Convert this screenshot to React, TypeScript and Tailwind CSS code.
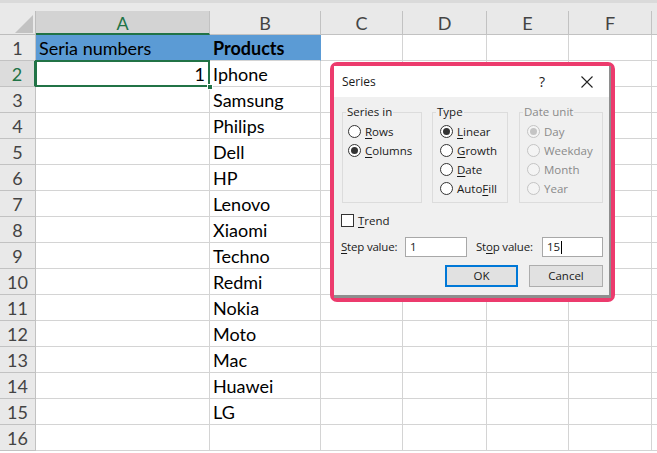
import React from 'react';

const cols = [
  { l: 'A', w: 'w-[174px]' },
  { l: 'B', w: 'w-[111px]' },
  { l: 'C', w: 'w-[82px]' },
  { l: 'D', w: 'w-[84px]' },
  { l: 'E', w: 'w-[82px]' },
  { l: 'F', w: 'w-[83px]' },
  { l: '', w: 'w-[60px]' },
];

const products = ['Iphone', 'Samsung', 'Philips', 'Dell', 'HP', 'Lenovo', 'Xiaomi', 'Techno', 'Redmi', 'Nokia', 'Moto', 'Mac', 'Huawei', 'LG'];

function Radio({ checked, disabled }: { checked?: boolean; disabled?: boolean }) {
  return (
    <span
      className={
        disabled
          ? 'flex h-[13px] w-[13px] shrink-0 items-center justify-center rounded-full border border-[#c4c4c4] bg-[#f4f4f4]'
          : 'flex h-[13px] w-[13px] shrink-0 items-center justify-center rounded-full border border-[#333333] bg-white'
      }
    >
      {checked && (
        <span className={disabled ? 'h-[7px] w-[7px] rounded-full bg-[#c4c4c4]' : 'h-[7px] w-[7px] rounded-full bg-[#333333]'} />
      )}
    </span>
  );
}

function Opt({ checked, disabled, pre, u, post }: { checked?: boolean; disabled?: boolean; pre?: string; u?: string; post: string }) {
  return (
    <div className="flex h-[19px] items-center gap-[4px]">
      <Radio checked={checked} disabled={disabled} />
      <span className={disabled ? 'text-[#8a8a8a]' : 'text-[#1a1a1a]'}>
        {pre}
        {u && <span className="underline underline-offset-[2px]">{u}</span>}
        {post}
      </span>
    </div>
  );
}

function Group({ label, w, pl, disabled, children }: { label: string; w: string; pl: string; disabled?: boolean; children: React.ReactNode }) {
  return (
    <div className={`relative h-[91px] border border-[#dcdcdc] pt-[9px] ${w} ${pl}`}>
      <span className={`absolute -top-[9px] left-[3px] bg-[#f0f0f0] px-[1px] leading-[16px] ${disabled ? 'text-[#8a8a8a]' : 'text-[#1a1a1a]'}`}>
        {label}
      </span>
      {children}
    </div>
  );
}

function Dialog() {
  return (
    <div className="absolute left-[330px] top-[62px] h-[240px] w-[285px] rounded-[7px] border-[4px] border-[#ec3b6d] bg-[#ec3b6d] font-['Open_Sans',sans-serif] text-[11.5px]">
      <div className="flex h-full flex-col border-b-[3px] border-r-[2px] border-[#8e8e8e] bg-[#f0f0f0]">
        <div className="flex h-[31px] items-center bg-white pl-[8px] text-[12px] text-[#1a1a1a]">
          <span>Series</span>
          <div className="ml-auto flex items-center">
            <span className="flex w-[20px] justify-center text-[14px]">?</span>
            <span className="ml-[12px] flex w-[45px] justify-center">
              <svg width="12" height="12" viewBox="0 0 12 12">
                <path d="M0.5 0.5 L11.5 11.5 M11.5 0.5 L0.5 11.5" stroke="#222" strokeWidth="1.1" />
              </svg>
            </span>
          </div>
        </div>
        <div className="flex flex-col pl-[8px]">
          <div className="mt-[15px] flex">
            <Group label="Series in" w="w-[80px]" pl="pl-[5px]">
              <Opt pre="" u="R" post="ows" />
              <Opt checked pre="" u="C" post="olumns" />
            </Group>
            <div className="ml-[10px]">
              <Group label="Type" w="w-[76px]" pl="pl-[7px]">
                <Opt checked pre="" u="L" post="inear" />
                <Opt pre="" u="G" post="rowth" />
                <Opt pre="" u="D" post="ate" />
                <Opt pre="Auto" u="F" post="ill" />
              </Group>
            </div>
            <div className="ml-[11px]">
              <Group label="Date unit" w="w-[84px]" pl="pl-[7px]" disabled>
                <Opt checked disabled post="Day" />
                <Opt disabled post="Weekday" />
                <Opt disabled post="Month" />
                <Opt disabled post="Year" />
              </Group>
            </div>
          </div>
          <div className="mt-[8px] flex h-[19px] items-center gap-[4px] text-[#1a1a1a]">
            <span className="ml-[-1px] h-[13px] w-[13px] border border-[#333333] bg-white" />
            <span>
              <span className="underline underline-offset-[2px]">T</span>rend
            </span>
          </div>
          <div className="mt-[7px] flex h-[20px] items-center text-[#1a1a1a]">
            <span className="ml-[-1px] w-[64px] tracking-[-0.2px]">
              <span className="underline underline-offset-[2px]">S</span>tep value:
            </span>
            <div className="flex h-[20px] w-[62px] items-center border border-[#a8a8a8] bg-white pl-[4px]">1</div>
            <span className="ml-[9px] w-[66px] tracking-[-0.2px]">
              St<span className="underline underline-offset-[2px]">o</span>p value:
            </span>
            <div className="flex h-[20px] w-[61px] items-center border border-[#a8a8a8] bg-white pl-[4px]">
              15<span className="ml-[1px] h-[13px] w-[1px] bg-black" />
            </div>
          </div>
          <div className="mt-[8px] flex h-[22px] text-[#1a1a1a]">
            <div className="ml-[103px] flex h-[22px] w-[73px] items-center justify-center border-2 border-[#0078d7] bg-[#e1e1e1]">OK</div>
            <div className="ml-[11px] flex h-[22px] w-[74px] items-center justify-center border border-[#adadad] bg-[#e1e1e1]">Cancel</div>
          </div>
        </div>
      </div>
    </div>
  );
}

export default function App() {
  const rows = Array.from({ length: 16 }, (_, i) => i + 1);
  return (
    <div className="relative h-[453px] w-[657px] overflow-hidden bg-white font-['Lato',sans-serif] text-[18px] text-black">
      <div className="h-[11px] border-t-[3px] border-[#dadada] bg-[#e9e9e9]" />
      {/* Column header */}
      <div className="flex h-[24px]">
        <div className="relative h-[24px] w-[36px] shrink-0 border-b border-r border-[#bdbdbd] bg-[#e9e9e9]">
          <svg className="absolute left-[15px] top-[4px]" width="18" height="18" viewBox="0 0 18 18">
            <polygon points="18,0 18,18 0,18" fill="#c2c2c2" />
          </svg>
        </div>
        {cols.map((c, i) => (
          <div
            key={i}
            className={
              c.l === 'A'
                ? `flex h-[24px] shrink-0 items-center justify-center border-b-2 border-r border-b-[#217346] border-r-[#c2c2c2] bg-[#d3d3d3] pt-[1px] leading-none text-[#217346] ${c.w}`
                : `flex h-[24px] shrink-0 items-center justify-center border-b border-r border-[#c2c2c2] bg-[#e9e9e9] pt-[1px] leading-none text-[#444444] ${c.w}`
            }
          >
            {c.l}
          </div>
        ))}
      </div>
      {rows.map((r) => (
        <div key={r} className="flex h-[26px]">
          <div
            className={
              r === 2
                ? 'flex h-[26px] w-[36px] shrink-0 items-center justify-center border-b border-r-2 border-b-[#c2c2c2] border-r-[#217346] bg-[#dcdcdc] pt-[1px] text-[#217346]'
                : 'flex h-[26px] w-[36px] shrink-0 items-center justify-center border-b border-r border-[#c2c2c2] bg-[#e9e9e9] pt-[1px] text-[#444444]'
            }
          >
            {r}
          </div>
          {cols.map((c, i) => {
            const blue = r === 1 && (c.l === 'A' || c.l === 'B');
            let content: React.ReactNode = null;
            if (r === 1 && c.l === 'A') content = 'Seria numbers';
            if (r === 1 && c.l === 'B') content = <span className="font-bold">Products</span>;
            if (r >= 2 && r <= 15 && c.l === 'B') content = products[r - 2];
            const isSel = r === 2 && c.l === 'A';
            return (
              <div
                key={i}
                className={
                  blue
                    ? `flex h-[26px] shrink-0 items-center whitespace-nowrap border-b border-r border-b-[#d4d4d4] border-r-[#5b9bd5] bg-[#5b9bd5] pl-[3px] pt-[1px] ${c.w}`
                    : isSel
                    ? `relative flex h-[26px] shrink-0 items-center justify-end border-b border-r border-[#d4d4d4] pr-[4px] pt-[1px] ${c.w}`
                    : `flex h-[26px] shrink-0 items-center whitespace-nowrap border-b border-r border-[#d4d4d4] pl-[3px] pt-[1px] ${c.w}`
                }
              >
                {isSel ? (
                  <>
                    1
                    <div className="absolute -left-[1px] -top-[1px] bottom-[-1px] right-[-1px] border-2 border-[#217346]" />
                    <div className="absolute bottom-[-4px] right-[-4px] h-[6px] w-[6px] border border-white bg-[#217346]" />
                  </>
                ) : (
                  content
                )}
              </div>
            );
          })}
        </div>
      ))}
      <Dialog />
    </div>
  );
}
